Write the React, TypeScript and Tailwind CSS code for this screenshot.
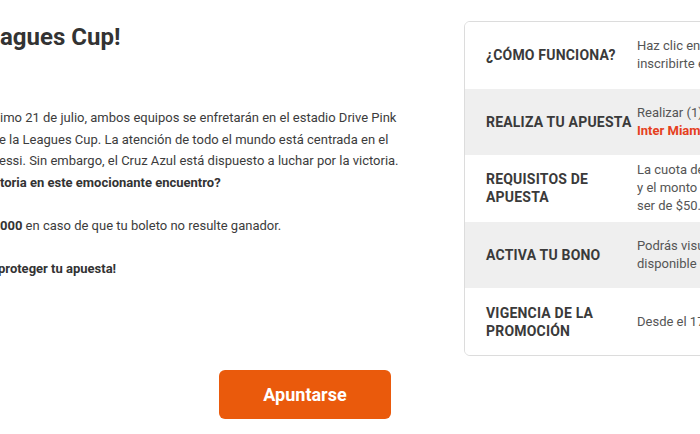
import React from "react";

const rows = [
  {
    label: ["¿CÓMO FUNCIONA?"],
    value: [<>Haz clic en el botón "Apuntarse" para</>, <>inscribirte en la promoción.</>],
    gray: false,
  },
  {
    label: ["REALIZA TU APUESTA"],
    value: [
      <>Realizar (1) apuesta simple al ganador del partido</>,
      <span className="font-bold text-[#e5401d]">Inter Miami vs Cruz Azul</span>,
    ],
    gray: true,
  },
  {
    label: ["REQUISITOS DE", "APUESTA"],
    value: [
      <>La cuota de la apuesta debe ser mínimo 1.50</>,
      <>y el monto mínimo de la apuesta debe</>,
      <>ser de $50.00 MXN.</>,
    ],
    gray: false,
  },
  {
    label: ["ACTIVA TU BONO"],
    value: [<>Podrás visualizar tu bono en caso de estar</>, <>disponible en la sección de promociones.</>],
    gray: true,
  },
  {
    label: ["VIGENCIA DE LA", "PROMOCIÓN"],
    value: [<>Desde el 17 de julio hasta el 21 de julio.</>],
    gray: false,
  },
];

export default function App() {
  return (
    <div className="flex h-[434px] w-[700px] overflow-hidden bg-white font-['Roboto',sans-serif] text-[#3c3c3c]">
      {/* Columna izquierda */}
      <div className="flex w-[464px] shrink-0 flex-col">
        <h1 className="mt-[22px] whitespace-nowrap text-[24px] font-bold leading-[30px] text-[#333]">
          agues Cup!
        </h1>

        <div className="mt-[55px] text-[13px] leading-[21.5px]">
          <p className="whitespace-nowrap">imo 21 de julio, ambos equipos se enfretarán en el estadio Drive Pink</p>
          <p className="-ml-[1px] whitespace-nowrap">e la Leagues Cup. La atención de todo el mundo está centrada en el</p>
          <p className="-ml-[1px] whitespace-nowrap">essi. Sin embargo, el Cruz Azul está dispuesto a luchar por la victoria.</p>
          <p className="whitespace-nowrap font-bold text-[#333]">toria en este emocionante encuentro?</p>

          <p className="mt-[21.5px] whitespace-nowrap">
            <span className="font-bold text-[#333]">000</span> en caso de que tu boleto no resulte ganador.
          </p>

          <p className="-ml-[2px] mt-[21.5px] whitespace-nowrap font-bold text-[#333]">proteger tu apuesta!</p>
        </div>

        <button className="ml-[219px] mt-[91px] h-[49px] w-[172px] rounded-md bg-[#ea5a0c] text-[18px] font-bold text-white">
          Apuntarse
        </button>
      </div>

      {/* Tabla de la promoción */}
      <div className="mt-[21px] w-[400px] shrink-0 self-start overflow-hidden rounded-md border border-[#dcdcdc]">
        {rows.map((r, i) => (
          <div key={i} className={`flex h-[66.6px] items-center ${r.gray ? "bg-[#efefef]" : "bg-white"}`}>
            <div className="w-[172px] shrink-0 pl-[21px] text-[14px] font-bold leading-[18px] tracking-[0.2px] text-[#3a3a3a]">
              {r.label.map((l, j) => (
                <div key={j} className="whitespace-nowrap">{l}</div>
              ))}
            </div>
            <div className="text-[13px] leading-[18px] text-[#555]">
              {r.value.map((v, j) => (
                <div key={j} className="whitespace-nowrap">{v}</div>
              ))}
            </div>
          </div>
        ))}
      </div>
    </div>
  );
}
